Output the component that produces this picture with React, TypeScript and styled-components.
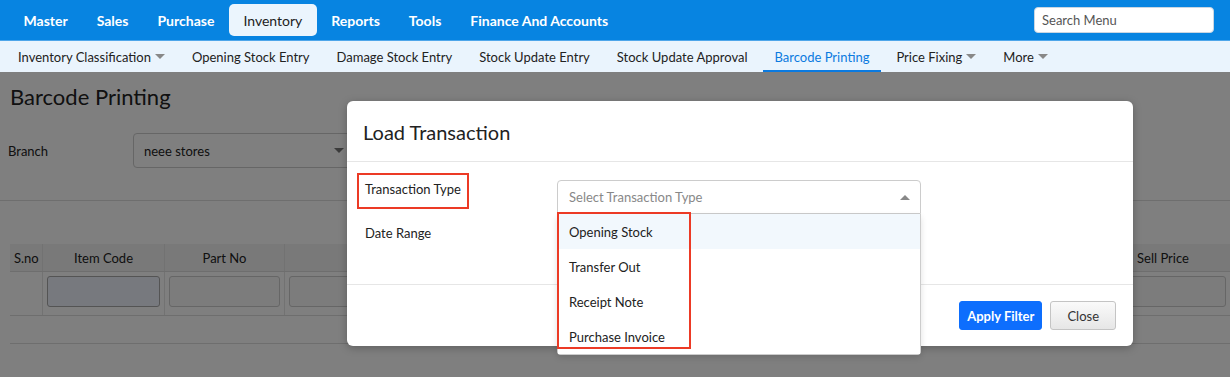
import styled, { createGlobalStyle } from "styled-components";

const GlobalStyle = createGlobalStyle`
    body {
        margin: 0;
        font-family: Lato, "Open Sans", sans-serif;
        color: #222;
        background: #fff;
    }
    * { box-sizing: border-box; }
`;

const TopBar = styled.div`
    height: 41px;
    background: #0784e1;
    display: flex;
    align-items: center;
    padding: 0 16px 0 9px;
    border-bottom: 1px solid #4ea6ea;
`;

const MenuItem = styled.div<{ $active?: boolean }>`
    height: 32px;
    display: flex;
    align-items: center;
    padding: 0 14.5px;
    font-size: 14px;
    font-weight: ${(p) => (p.$active ? 400 : 700)};
    color: ${(p) => (p.$active ? "#222" : "#fff")};
    background: ${(p) => (p.$active ? "#ebf5fd" : "transparent")};
    border-radius: 5px;
`;

const SearchInput = styled.input`
    margin-left: auto;
    width: 180px;
    height: 26px;
    border: 1px solid #c9d6e2;
    border-radius: 4px;
    padding: 0 7px;
    font-family: Lato, sans-serif;
    font-size: 13px;
    &::placeholder { color: #555; }
`;

const SubBar = styled.div`
    height: 31px;
    background: #eaf4fd;
    display: flex;
    align-items: stretch;
    padding-left: 6px;
    gap: 3px;
`;

const SubItem = styled.div<{ $active?: boolean }>`
    display: flex;
    align-items: center;
    gap: 3px;
    padding: 0 12px;
    font-size: 13px;
    color: ${(p) => (p.$active ? "#0a7ae0" : "#222")};
    border-bottom: 2px solid ${(p) => (p.$active ? "#0a7ae0" : "transparent")};
    border-top: 2px solid transparent;
`;

const Caret = styled.span<{ $up?: boolean; $color?: string }>`
    width: 0;
    height: 0;
    border-left: 5px solid transparent;
    border-right: 5px solid transparent;
    ${(p) =>
        p.$up
            ? `border-bottom: 5px solid ${p.$color || "#888"};`
            : `border-top: 5px solid ${p.$color || "#888"};`}
    margin-left: 1px;
`;

const Content = styled.div`
    position: relative;
    height: 305px;
    overflow: hidden;
`;

const Page = styled.div`
    padding-top: 12px;
`;

const PageTitle = styled.h1`
    margin: 0 0 0 10px;
    font-size: 22px;
    font-weight: 400;
    line-height: 26px;
    color: #222;
`;

const FilterRow = styled.div`
    display: flex;
    align-items: center;
    padding: 23px 0 0 8px;
`;

const FieldLabel = styled.div`
    width: 125px;
    font-size: 13px;
`;

const FakeSelect = styled.div`
    width: 220px;
    height: 35px;
    border: 1px solid #ccc;
    border-radius: 4px;
    display: flex;
    align-items: center;
    justify-content: space-between;
    padding: 0 8px 0 10px;
    font-size: 13px;
`;

const Divider = styled.div`
    height: 1px;
    background: #ddd;
    margin-top: 32px;
`;

const Table = styled.div`
    margin: 43px 0 0 10px;
`;

const TableRow = styled.div<{ $head?: boolean; $height: number }>`
    display: grid;
    grid-template-columns: 33px 122px 120px 360px 1fr 134px;
    height: ${(p) => p.$height}px;
    background: ${(p) => (p.$head ? "#f3f3f3" : "#fff")};
    border-bottom: 1px solid #ddd;
`;

const HeadCell = styled.div<{ $left?: boolean }>`
    display: flex;
    align-items: center;
    justify-content: ${(p) => (p.$left ? "flex-start" : "center")};
    padding-left: ${(p) => (p.$left ? "4px" : "0")};
    font-size: 13px;
    color: #222;
    border-right: 1px solid #e4e4e4;
    &:last-child { border-right: none; }
`;

const BodyCell = styled.div`
    padding: 4px;
    border-right: 1px solid #e4e4e4;
    &:last-child { border-right: none; }
`;

const CellInput = styled.div<{ $focus?: boolean }>`
    height: 31px;
    border: 1px solid ${(p) => (p.$focus ? "#a8a8a8" : "#ccc")};
    border-radius: 3px;
    background: ${(p) => (p.$focus ? "#eef3fc" : "#f8f8f8")};
`;

const Backdrop = styled.div`
    position: absolute;
    inset: 0;
    background: rgba(0, 0, 0, 0.5);
`;

const Modal = styled.div`
    position: absolute;
    left: 347px;
    top: 29px;
    width: 786px;
    background: #fff;
    border-radius: 6px;
    box-shadow: 0 2px 8px rgba(0, 0, 0, 0.25);
`;

const ModalHeader = styled.div`
    height: 61px;
    padding: 0 16px;
    display: flex;
    align-items: center;
    border-bottom: 1px solid #e6e6e6;
`;

const ModalTitle = styled.h2`
    margin: 2px 0 0;
    font-size: 20px;
    font-weight: 400;
    color: #222;
`;

const ModalBody = styled.div`
    height: 122px;
    padding: 11px 16px 0 10px;
    display: flex;
    flex-direction: column;
    gap: 3px;
`;

const FormRow = styled.div`
    display: flex;
    align-items: flex-start;
`;

const FormLabel = styled.div`
    width: 200px;
    font-size: 13px;
    line-height: 18px;
    color: #222;
`;

const Marked = styled.span<{ $marked?: boolean }>`
    display: inline-block;
    width: 112px;
    height: 36px;
    padding: 5px 6px;
    border: 2px solid ${(p) => (p.$marked ? "#ec3a25" : "transparent")};
`;

const SelectWrap = styled.div`
    position: relative;
    width: 364px;
    margin-top: 7px;
`;

const SelectBox = styled.div`
    height: 34px;
    border: 1px solid #ccc;
    border-radius: 4px 4px 0 0;
    display: flex;
    align-items: center;
    justify-content: space-between;
    padding: 0 10px 0 11px;
    font-size: 13px;
    color: #888;
`;

const OptionList = styled.div`
    position: absolute;
    left: 0;
    top: 34px;
    width: 100%;
    background: #fff;
    border: 1px solid #ccc;
    border-top: none;
    border-radius: 0 0 4px 4px;
    box-shadow: 0 3px 6px rgba(0, 0, 0, 0.12);
    z-index: 2;
`;

const Option = styled.div<{ $hover?: boolean }>`
    height: 35px;
    display: flex;
    align-items: center;
    padding-left: 11px;
    font-size: 13px;
    color: #222;
    background: ${(p) => (p.$hover ? "#f2f8fd" : "#fff")};
`;

const Annotation = styled.div`
    position: absolute;
    left: -1px;
    top: -2px;
    width: 134px;
    height: 137px;
    border: 2px solid #ec3a25;
    pointer-events: none;
`;

const ModalFooter = styled.div`
    height: 62px;
    border-top: 1px solid #e6e6e6;
    display: flex;
    align-items: center;
    justify-content: flex-end;
    gap: 8px;
    padding: 0 17px 0 0;
`;

const Button = styled.button<{ $primary?: boolean }>`
    height: 29px;
    padding: 0 ${(p) => (p.$primary ? "7px" : "16px")};
    font-family: Lato, sans-serif;
    font-size: 13px;
    font-weight: ${(p) => (p.$primary ? 700 : 400)};
    border-radius: 3px;
    color: ${(p) => (p.$primary ? "#fff" : "#333")};
    background: ${(p) => (p.$primary ? "#0d6efd" : "linear-gradient(#fafafa, #e6e6e6)")};
    border: 1px solid ${(p) => (p.$primary ? "#0d6efd" : "#c4c4c4")};
`;

const menu = ["Master", "Sales", "Purchase", "Inventory", "Reports", "Tools", "Finance And Accounts"];
const subMenu = [
    { label: "Inventory Classification", caret: true },
    { label: "Opening Stock Entry" },
    { label: "Damage Stock Entry" },
    { label: "Stock Update Entry" },
    { label: "Stock Update Approval" },
    { label: "Barcode Printing", active: true },
    { label: "Price Fixing", caret: true },
    { label: "More", caret: true },
];
const options = ["Opening Stock", "Transfer Out", "Receipt Note", "Purchase Invoice"];

export default function App() {
    return (
        <>
            <GlobalStyle />
            <TopBar>
                {menu.map((m) => (
                    <MenuItem key={m} $active={m === "Inventory"}>{m}</MenuItem>
                ))}
                <SearchInput placeholder="Search Menu" />
            </TopBar>
            <SubBar>
                {subMenu.map((s) => (
                    <SubItem key={s.label} $active={s.active}>
                        {s.label}
                        {s.caret && <Caret />}
                    </SubItem>
                ))}
            </SubBar>
            <Content>
                <Page>
                    <PageTitle>Barcode Printing</PageTitle>
                    <FilterRow>
                        <FieldLabel>Branch</FieldLabel>
                        <FakeSelect>
                            neee stores
                            <Caret $color="#777" />
                        </FakeSelect>
                    </FilterRow>
                    <Divider />
                    <Table>
                        <TableRow $head $height={28}>
                            <HeadCell $left>S.no</HeadCell>
                            <HeadCell>Item Code</HeadCell>
                            <HeadCell>Part No</HeadCell>
                            <HeadCell>Item Name</HeadCell>
                            <HeadCell>Qty</HeadCell>
                            <HeadCell>Sell Price</HeadCell>
                        </TableRow>
                        <TableRow $height={44}>
                            <BodyCell />
                            <BodyCell><CellInput $focus /></BodyCell>
                            <BodyCell><CellInput /></BodyCell>
                            <BodyCell><CellInput /></BodyCell>
                            <BodyCell><CellInput /></BodyCell>
                            <BodyCell><CellInput /></BodyCell>
                        </TableRow>
                        <TableRow $height={28} />
                    </Table>
                </Page>
                <Backdrop />
                <Modal>
                    <ModalHeader>
                        <ModalTitle>Load Transaction</ModalTitle>
                    </ModalHeader>
                    <ModalBody>
                        <FormRow>
                            <FormLabel><Marked $marked>Transaction Type</Marked></FormLabel>
                            <SelectWrap>
                                <SelectBox>
                                    Select Transaction Type
                                    <Caret $up $color="#888" />
                                </SelectBox>
                                <OptionList>
                                    {options.map((o, i) => (
                                        <Option key={o} $hover={i === 0}>{o}</Option>
                                    ))}
                                    <Annotation />
                                </OptionList>
                            </SelectWrap>
                        </FormRow>
                        <FormRow>
                            <FormLabel><Marked>Date Range</Marked></FormLabel>
                        </FormRow>
                    </ModalBody>
                    <ModalFooter>
                        <Button $primary>Apply Filter</Button>
                        <Button>Close</Button>
                    </ModalFooter>
                </Modal>
            </Content>
        </>
    );
}
